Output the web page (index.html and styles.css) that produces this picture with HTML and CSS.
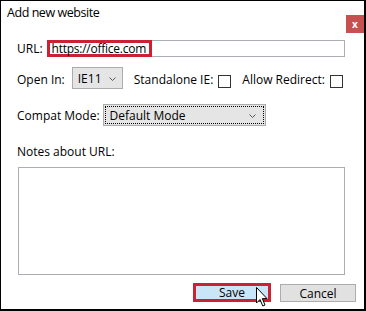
FILE: index.html
```html
<!DOCTYPE html>
<html>
<head>
    <title>Add new website</title>
    <link rel="stylesheet" href="styles.css">
</head>
<body>
    <div class="dialog">
        <div class="titlebar">
            <span class="title">Add new website</span>
            <span class="close">x</span>
        </div>

        <div class="content">
            <div class="row url-row">
                <label class="lbl">URL:</label>
                <div class="textbox"><span class="mark">https://office.com</span></div>
            </div>

            <div class="row open-row">
                <label class="lbl">Open In:</label>
                <div class="combo combo-ie">
                    <span>IE11</span>
                    <svg class="chev" width="7" height="4" viewBox="0 0 7 4"><polyline points="0.5,0.5 3.5,3.5 6.5,0.5" fill="none" stroke="#555" stroke-width="1"/></svg>
                </div>
                <label class="lbl lbl-standalone">Standalone IE:</label>
                <span class="checkbox"></span>
                <label class="lbl lbl-redirect">Allow Redirect:</label>
                <span class="checkbox"></span>
            </div>

            <div class="row compat-row">
                <label class="lbl">Compat Mode:</label>
                <div class="combo combo-compat">
                    <div class="focus-ring">
                        <span>Default Mode</span>
                        <svg class="chev" width="7" height="4" viewBox="0 0 7 4"><polyline points="0.5,0.5 3.5,3.5 6.5,0.5" fill="none" stroke="#555" stroke-width="1"/></svg>
                    </div>
                </div>
            </div>

            <div class="notes-label">Notes about URL:</div>
            <div class="notes"></div>

            <div class="buttons">
                <div class="btn btn-save">
                    Save
                    <!-- mouse pointer hovering the button -->
                    <svg class="pointer" width="13" height="22" viewBox="0 0 13 22">
                        <path d="M1.5,1.5 L1.5,17 L5,13.5 L7.8,20 L10,19 L7.3,12.6 L12,12.6 Z" fill="#fff" stroke="#000" stroke-width="1" stroke-linejoin="miter"/>
                    </svg>
                </div>
                <div class="btn btn-cancel">Cancel</div>
            </div>
        </div>
    </div>
</body>
</html>
```

FILE: styles.css
```css
body {
    margin: 0;
    font-family: "Open Sans", "Noto Sans", sans-serif;
    font-size: 12px;
    color: #000;
    background: #fff;
}
.dialog {
    width: 366px;
    height: 311px;
    box-sizing: border-box;
    border: 1px solid #000;
    border-right-width: 2px;
    border-bottom-width: 2px;
    background: #fff;
    display: flex;
    flex-direction: column;
}
.titlebar {
    display: flex;
    justify-content: space-between;
    align-items: flex-start;
    height: 39px;
}
.title {
    padding: 4px 0 0 6px;
    font-size: 12.5px;
    letter-spacing: -0.45px;
    line-height: 16px;
}
.close {
    margin-top: 14px;
    width: 18px;
    height: 18px;
    background: #c75050;
    color: #fff;
    font-weight: bold;
    font-size: 10px;
    line-height: 1;
    display: flex;
    align-items: center;
    justify-content: center;
}
.content {
    padding: 0 19px 0 16px;
    display: flex;
    flex-direction: column;
}
.row {
    display: flex;
    align-items: center;
    line-height: 16px;
}
.url-row {
    height: 17px;
}
.textbox {
    flex: 1;
    height: 17px;
    box-sizing: border-box;
    border: 1px solid #abadb3;
    margin-left: 4px;
    display: flex;
}
.mark {
    margin: -1px 0 -1px -1px;
    border: 3px solid #cc2131;
    padding: 0 3px 0 2px;
    height: 11px;
    letter-spacing: -0.25px;
    display: flex;
    align-items: center;
}
.open-row {
    margin-top: 10px;
    align-items: flex-end;
}
.open-row .lbl {
    padding-bottom: 1px;
}
.combo {
    height: 22px;
    box-sizing: border-box;
    border: 1px solid #acacac;
    background: #e5e5e5;
    display: flex;
    align-items: center;
}
.combo-ie {
    width: 51px;
    margin-left: 7px;
    padding: 2px 6px 0 5px;
    justify-content: space-between;
}
.chev {
    flex: none;
}
.checkbox {
    width: 13px;
    height: 13px;
    box-sizing: border-box;
    border: 1px solid #333;
    background: #fff;
    margin: 0 0 1px 5px;
}
.lbl-standalone,
.lbl-redirect {
    margin-left: 11px;
}
.compat-row {
    margin-top: 15px;
}
.compat-row .lbl {
    padding-top: 2px;
}
.combo-compat {
    width: 163px;
    margin-left: 3px;
    padding: 1px;
}
.focus-ring {
    flex: 1;
    height: 100%;
    box-sizing: border-box;
    border: 1px dotted #000;
    padding: 1px 7px 0 4px;
    display: flex;
    align-items: center;
    justify-content: space-between;
}
.notes-label {
    margin-top: 18px;
    line-height: 16px;
}
.notes {
    margin: 7px 0 0 1px;
    height: 106px;
    border: 1px solid #abadb3;
}
.buttons {
    display: flex;
    justify-content: flex-end;
    align-items: flex-start;
    margin: 8px -11px 0 0;
}
.btn {
    position: relative;
    box-sizing: border-box;
    display: flex;
    align-items: center;
    justify-content: center;
}
.btn-save {
    width: 78px;
    height: 19px;
    border: 3px solid #cc2131;
    background: #c9e5f8;
}
.btn-cancel {
    width: 76px;
    height: 18px;
    margin: 1px 0 0 9px;
    border: 1px solid #adadad;
    background: #e1e1e1;
}
.pointer {
    position: absolute;
    left: 59px;
    top: 0px;
}
```
